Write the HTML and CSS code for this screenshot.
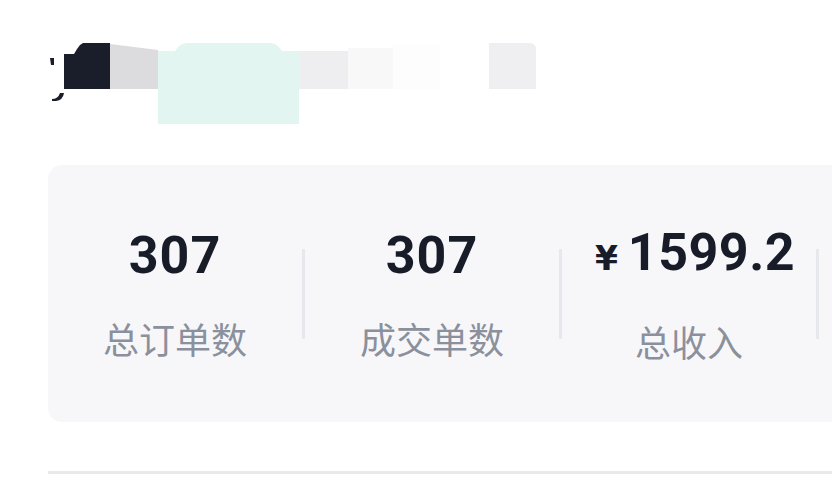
FILE: index.html
```html
<!DOCTYPE html>
<html lang="zh-CN">
<head>
    <meta charset="UTF-8">
    <meta name="viewport" content="width=device-width, initial-scale=1.0">
    <title>订单统计</title>
    <link rel="stylesheet" href="styles.css">
</head>
<body>
    <header class="title-mask">
        <svg class="mark" width="14" height="60" viewBox="0 0 14 60">
            <path d="M0 15 L4 15 L4 22 L1 22 Z" fill="#1a1e2a"/>
            <path d="M2 56 Q8 56 10 50 L14 50 Q13 57 6 58 L2 58 Z" fill="#1a1e2a"/>
        </svg>
        <div class="blk blk-dark"></div>
        <div class="blk blk-gray"></div>
        <div class="blk blk-mint"></div>
        <div class="blk blk-soft"></div>
        <div class="blk blk-pale"></div>
        <div class="blk blk-white"></div>
        <div class="blk blk-end"></div>
    </header>

    <section class="stats-card">
        <div class="stat">
            <div class="stat-value">307</div>
            <div class="stat-label">总订单数</div>
        </div>
        <span class="divider"></span>
        <div class="stat">
            <div class="stat-value">307</div>
            <div class="stat-label">成交单数</div>
        </div>
        <span class="divider"></span>
        <div class="stat">
            <div class="stat-value stat-money"><span class="yen">¥</span>1599.2</div>
            <div class="stat-label">总收入</div>
        </div>
        <span class="divider"></span>
        <div class="stat"></div>
    </section>

    <hr class="rule">
</body>
</html>
```

FILE: styles.css
```css
html, body {
    margin: 0;
    background-color: #ffffff;
    overflow: hidden;
}

body {
    width: 832px;
    height: 485px;
    font-family: Roboto, "Noto Sans CJK SC", sans-serif;
}

.title-mask {
    display: flex;
    align-items: flex-start;
    padding: 43px 0 0 50px;
    height: 83px;
}

.mark {
    display: block;
}

.blk {
    height: 46px;
}

.blk-dark {
    width: 46px;
    background-color: #1a1e2a;
    clip-path: polygon(0 11px, 10px 11px, 13px 6px, 16px 2px, 19px 0, 46px 0, 46px 46px, 0 46px);
}

.blk-gray {
    width: 48px;
    background-color: #dcdcde;
    clip-path: polygon(0 1px, 100% 7px, 100% 100%, 0 100%);
}

.blk-mint {
    width: 141px;
    height: 81px;
    background-color: #e3f5f1;
    clip-path: polygon(0 8px, 17px 8px, 20px 4px, 24px 1px, 29px 0, 112px 0, 117px 1px, 121px 4px, 124px 8px, 100% 8px, 100% 100%, 0 100%);
}

.blk-soft {
    width: 49px;
    margin-top: 8px;
    height: 38px;
    background-color: #eeeef0;
}

.blk-pale {
    width: 45px;
    margin-top: 5px;
    height: 41px;
    background-color: #f8f8f8;
}

.blk-white {
    width: 47px;
    margin-top: 1px;
    height: 45px;
    background-color: #fdfdfd;
}

.blk-end {
    width: 47px;
    margin-left: 49px;
    background-color: #efeff1;
    border-top-right-radius: 6px;
}

.stats-card {
    display: flex;
    align-items: center;
    width: 1040px;
    height: 257px;
    margin: 39px 0 0 48px;
    background-color: #f7f7f9;
    border-radius: 14px;
}

.stat {
    width: 254px;
    flex: none;
    display: flex;
    flex-direction: column;
    align-items: center;
    margin-top: -2px;
}

.stat-value {
    font-family: Roboto, sans-serif;
    font-weight: 700;
    font-size: 52px;
    line-height: 52px;
    letter-spacing: 1px;
    color: #181c28;
    display: flex;
    align-items: baseline;
}

.stat-money {
    padding-left: 12px;
    letter-spacing: 0.5px;
}

.yen {
    font-family: "DejaVu Sans", sans-serif;
    font-size: 33px;
    margin-right: 10px;
    letter-spacing: 0;
}

.stat-label {
    margin-top: 38px;
    font-family: "Noto Sans CJK SC", sans-serif;
    font-size: 36px;
    line-height: 36px;
    color: #8b909d;
}

.divider {
    flex: none;
    width: 3px;
    height: 90px;
    margin-top: 1px;
    background-color: #e6e8ed;
}

.rule {
    margin: 49px 0 0 48px;
    border: none;
    height: 3px;
    background-color: #e8e9ec;
}
```
